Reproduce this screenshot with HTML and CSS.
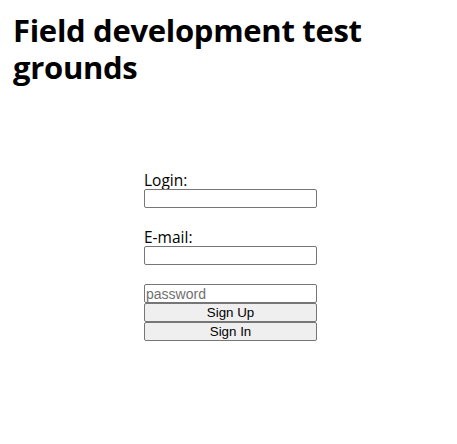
FILE: index.html
```html
<!DOCTYPE html>
<html>
<head>
<meta charset="utf-8">
<link rel="stylesheet" href="styles.css">
</head>
<body>
<h1 class="title">Field development test grounds</h1>
<form class="auth">
  <label class="field-label" for="login">Login:</label>
  <input class="field" id="login" type="text">
  <label class="field-label spaced" for="email">E-mail:</label>
  <input class="field" id="email" type="text">
  <input class="field spaced-input" type="password" placeholder="password">
  <button class="btn" type="button">Sign Up</button>
  <button class="btn" type="button">Sign In</button>
</form>
</body>
</html>
```
FILE: styles.css
```css
html, body {
  margin: 0;
  background: #fff;
}
body {
  font-family: "Open Sans", "DejaVu Sans", sans-serif;
  color: #000;
  padding: 12px 13px 0 13px;
}
.title {
  margin: 0;
  font-family: "Open Sans", "DejaVu Sans", sans-serif;
  font-size: 31px;
  font-weight: 700;
  letter-spacing: -0.3px;
  line-height: 37px;
  width: 380px;
}
.auth {
  display: flex;
  flex-direction: column;
  width: 173px;
  margin: 86px 0 0 131px;
}
.field-label {
  font-size: 15.5px;
  line-height: 17px;
}
.spaced {
  margin-top: 21px;
}
.field {
  box-sizing: border-box;
  width: 173px;
  height: 19px;
  margin: 0;
  padding: 0 1px;
  border: 1px solid #767676;
  border-radius: 2px;
  font-family: "Liberation Sans", Arial, sans-serif;
  font-size: 14px;
  background: #fff;
}
.field::placeholder {
  color: #707070;
}
.spaced-input {
  margin-top: 19px;
}
.btn {
  box-sizing: border-box;
  width: 173px;
  height: 19px;
  margin: 0;
  padding: 0;
  border: 1px solid #767676;
  border-radius: 2px;
  background: #efefef;
  color: #000;
  font-family: "Liberation Sans", Arial, sans-serif;
  font-size: 13.33px;
  line-height: 17px;
}
```
